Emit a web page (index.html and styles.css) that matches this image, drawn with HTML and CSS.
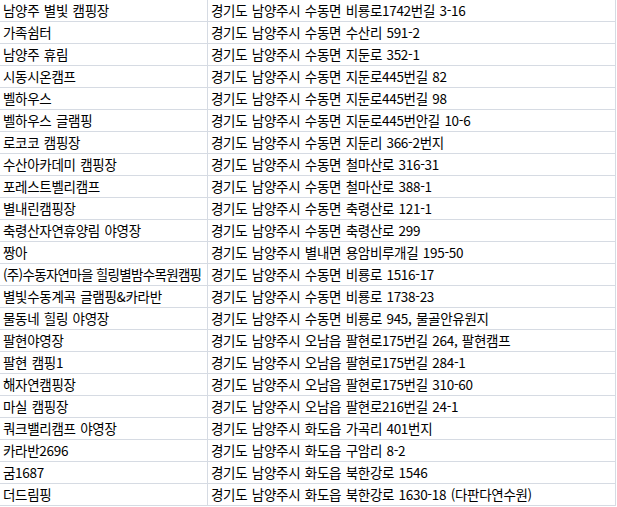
FILE: index.html
```html
<!DOCTYPE html>
<html lang="ko">
<head>
<meta charset="utf-8">
<link rel="stylesheet" href="styles.css">
</head>
<body>
<div class="sheet">
  <div class="cell">남양주 별빛 캠핑장</div><div class="cell">경기도 남양주시 수동면 비룡로1742번길 3-16</div>
  <div class="cell">가족쉼터</div><div class="cell">경기도 남양주시 수동면 수산리 591-2</div>
  <div class="cell">남양주 휴림</div><div class="cell">경기도 남양주시 수동면 지둔로 352-1</div>
  <div class="cell">시동시온캠프</div><div class="cell">경기도 남양주시 수동면 지둔로445번길 82</div>
  <div class="cell">벨하우스</div><div class="cell">경기도 남양주시 수동면 지둔로445번길 98</div>
  <div class="cell">벨하우스 글램핑</div><div class="cell">경기도 남양주시 수동면 지둔로445번안길 10-6</div>
  <div class="cell">로코코 캠핑장</div><div class="cell">경기도 남양주시 수동면 지둔리 366-2번지</div>
  <div class="cell">수산아카데미 캠핑장</div><div class="cell">경기도 남양주시 수동면 철마산로 316-31</div>
  <div class="cell">포레스트벨리캠프</div><div class="cell">경기도 남양주시 수동면 철마산로 388-1</div>
  <div class="cell">별내린캠핑장</div><div class="cell">경기도 남양주시 수동면 축령산로 121-1</div>
  <div class="cell">축령산자연휴양림 야영장</div><div class="cell">경기도 남양주시 수동면 축령산로 299</div>
  <div class="cell">짱아</div><div class="cell">경기도 남양주시 별내면 용암비루개길 195-50</div>
  <div class="cell cell-tight">(주)수동자연마을 힐링별밤수목원캠핑</div><div class="cell">경기도 남양주시 수동면 비룡로 1516-17</div>
  <div class="cell">별빛수동계곡 글램핑&amp;카라반</div><div class="cell">경기도 남양주시 수동면 비룡로 1738-23</div>
  <div class="cell">물동네 힐링 야영장</div><div class="cell">경기도 남양주시 수동면 비룡로 945, 물골안유원지</div>
  <div class="cell">팔현야영장</div><div class="cell">경기도 남양주시 오남읍 팔현로175번길 264, 팔현캠프</div>
  <div class="cell">팔현 캠핑1</div><div class="cell">경기도 남양주시 오남읍 팔현로175번길 284-1</div>
  <div class="cell">해자연캠핑장</div><div class="cell">경기도 남양주시 오남읍 팔현로175번길 310-60</div>
  <div class="cell">마실 캠핑장</div><div class="cell">경기도 남양주시 오남읍 팔현로216번길 24-1</div>
  <div class="cell">쿼크밸리캠프 야영장</div><div class="cell">경기도 남양주시 화도읍 가곡리 401번지</div>
  <div class="cell">카라반2696</div><div class="cell">경기도 남양주시 화도읍 구암리 8-2</div>
  <div class="cell">굼1687</div><div class="cell">경기도 남양주시 화도읍 북한강로 1546</div>
  <div class="cell">더드림핑</div><div class="cell">경기도 남양주시 화도읍 북한강로 1630-18 (다판다연수원)</div>
</div>
</body>
</html>
```

FILE: styles.css
```css
html, body {
  margin: 0;
  padding: 0;
  background: #ffffff;
}
body {
  font-family: "Noto Sans CJK KR", "Noto Sans", sans-serif;
  font-size: 13.5px;
  color: #000000;
}
.sheet {
  display: grid;
  grid-template-columns: 208px 408px;
  grid-auto-rows: 22px;
}
.cell {
  box-sizing: border-box;
  border-right: 1px solid #d6dbe3;
  border-bottom: 1px solid #d6dbe3;
  padding: 0 0 0 3px;
  line-height: 21px;
  white-space: nowrap;
  overflow: hidden;
  letter-spacing: -0.3px;
  word-spacing: 1px;
}
.cell-tight {
  letter-spacing: -0.7px;
  word-spacing: 0;
}
```
